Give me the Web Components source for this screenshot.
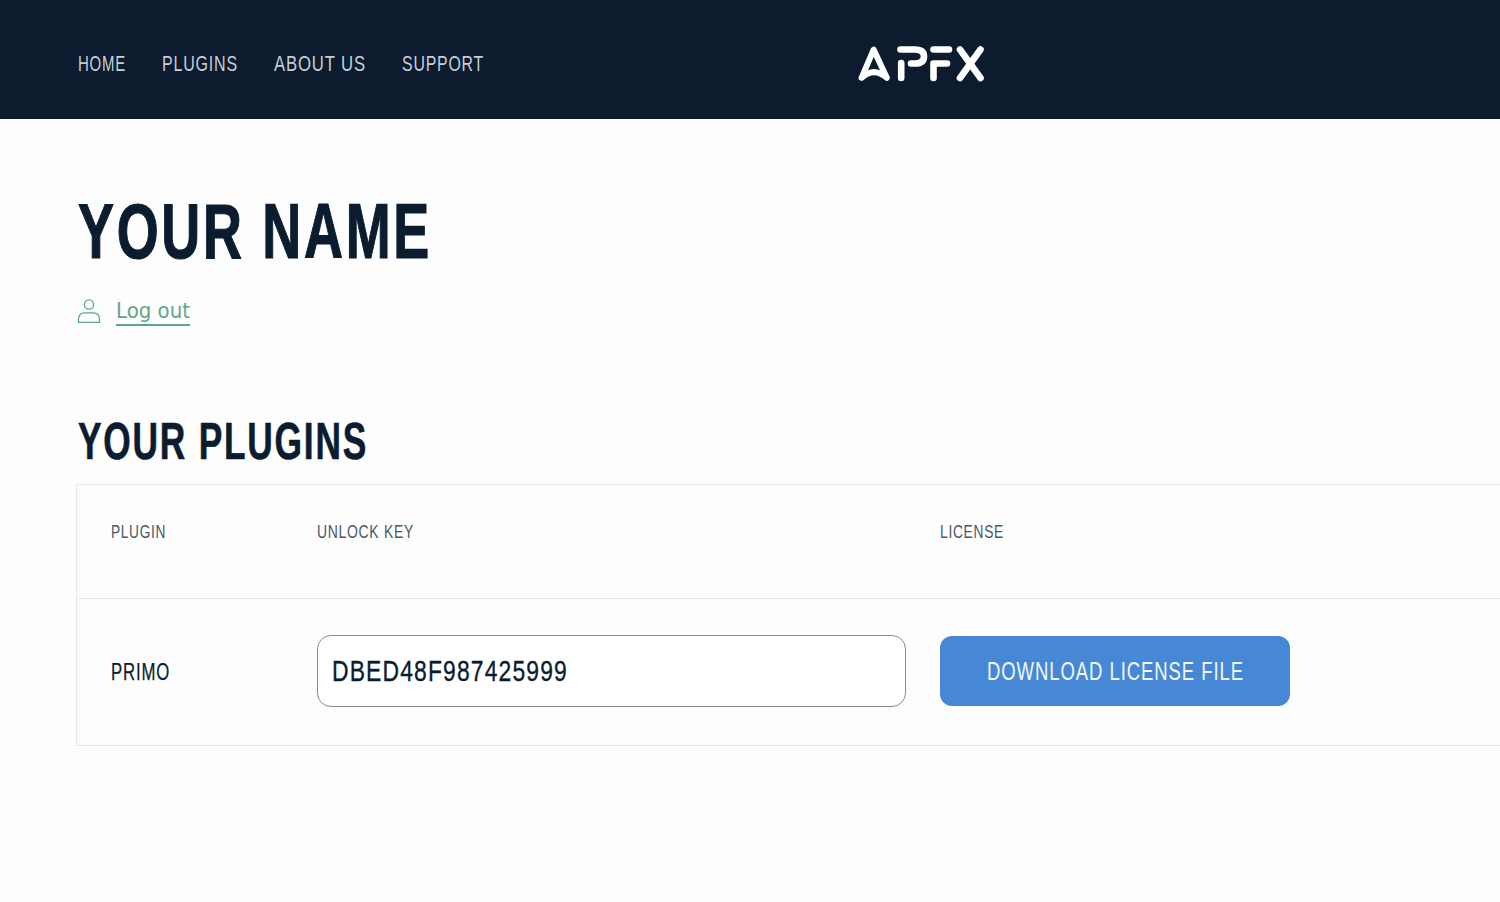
<!DOCTYPE html>
<html lang="en">
<head>
<meta charset="utf-8">
<title>APFX - Your plugins</title>
<style>
  html, body { margin: 0; height: 100%; background: #fdfdfd; overflow: hidden; }
  body { font-family: "Liberation Sans", sans-serif; color: #0a1c2e; }
</style>
</head>
<body>
<apfx-header>
  <a href="#"><fit-text w="48">HOME</fit-text></a>
  <a href="#"><fit-text w="76">PLUGINS</fit-text></a>
  <a href="#"><fit-text w="92">ABOUT US</fit-text></a>
  <a href="#"><fit-text w="82">SUPPORT</fit-text></a>
</apfx-header>
<account-page name="YOUR NAME">
  <plugin-table>
    <plugin-row name="PRIMO" unlock-key="DBED48F987425999"></plugin-row>
  </plugin-table>
</account-page>

<script>
// no condensed face is installed, so squeeze the text to the width it has in the design
class FitText extends HTMLElement {
  constructor() {
    super();
    this.attachShadow({ mode: 'open' });
    this.shadowRoot.innerHTML = `
      <style>
        :host { display: inline-block; vertical-align: top; white-space: nowrap; letter-spacing: 0.05em; }
        span { display: inline-block; transform-origin: 0 50%; }
      </style>
      <span><slot></slot></span>
    `;
  }
  connectedCallback() {
    const w = Number(this.getAttribute('w'));
    const span = this.shadowRoot.querySelector('span');
    const natural = span.getBoundingClientRect().width;
    span.style.transform = `scaleX(${w / natural})`;
    this.style.width = w + 'px';
  }
}

class ApfxHeader extends HTMLElement {
  constructor() {
    super();
    this.attachShadow({ mode: 'open' });
    this.shadowRoot.innerHTML = `
      <style>
        :host {
          display: grid;
          grid-template-columns: 781px auto 1fr;
          align-items: center;
          height: 119px;
          padding: 9px 0 0 77px;
          box-sizing: border-box;
          background: #0c1b2d;
        }
        nav { display: flex; gap: 36px; padding-left: 1px; }
        ::slotted(a) {
          color: #c6ced6;
          text-decoration: none;
          font-size: 22px;
          line-height: 26px;
        }
        svg { display: block; }
      </style>
      <nav><slot></slot></nav>
      <svg width="128" height="38" viewBox="0 0 128 38" fill="none" stroke="#fff" stroke-width="6.6" stroke-linecap="round" stroke-linejoin="round" role="img" aria-label="APFX">
        <path d="M15.6 4.6 L3.6 32.8 Q15.8 21.5 28.8 32.8 Z" stroke-width="6"/>
        <path d="M43.2 18 V33 M42.5 4.5 H57 Q66 4.5 66 11.5 Q66 18.5 57 18.5 H53"/>
        <path d="M75.5 4.5 H91 M75.5 18.5 H89 M75.5 18.5 V33"/>
        <path d="M102 4.5 L122.5 33 M122.5 4.5 L102 33"/>
      </svg>
    `;
  }
}

class AccountPage extends HTMLElement {
  constructor() {
    super();
    this.attachShadow({ mode: 'open' });
    this.shadowRoot.innerHTML = `
      <style>
        :host { display: block; padding: 66px 0 0 76px; }
        h1, h2 { margin: 0; font-weight: 700; color: #0a1c2e; }
        h1 { font-size: 78px; line-height: 92px; padding-left: 2px; -webkit-text-stroke: 1.2px #0a1c2e; }
        h2 { font-size: 51px; line-height: 60px; padding-left: 2px; margin: 0 0 12px; -webkit-text-stroke: 0.6px #0a1c2e; }
        .logout { display: flex; align-items: flex-start; gap: 14px; margin: 20px 0 86px 1px; }
        a {
          color: #5fa78a;
          font-family: "DejaVu Sans Condensed", "Liberation Sans", sans-serif;
          font-size: 22px;
          line-height: 27px;
          margin-left: 1px;
          text-decoration: none;
          border-bottom: 2px solid #5fa78a;
        }
        svg { display: block; margin-top: 1px; }
      </style>
      <h1><fit-text w="354"></fit-text></h1>
      <div class="logout">
        <svg width="24" height="26" viewBox="0 0 24 26" fill="none" stroke="#5fa78a" stroke-width="1.3">
          <circle cx="12" cy="6.5" r="4.6"/>
          <path d="M1.5 24.4 V21.5 Q1.5 14.8 8 14.8 H16 Q22.6 14.8 22.6 21.5 V24.4 Z" stroke-linejoin="round"/>
        </svg>
        <a href="#">Log out</a>
      </div>
      <h2><fit-text w="290">YOUR PLUGINS</fit-text></h2>
      <slot></slot>
    `;
    this.shadowRoot.querySelector('h1 fit-text').textContent = this.getAttribute('name');
  }
}

class PluginTable extends HTMLElement {
  constructor() {
    super();
    this.attachShadow({ mode: 'open' });
    this.shadowRoot.innerHTML = `
      <style>
        :host {
          display: block;
          border: 1px solid #e6e6e6;
          border-right: 0;
        }
        .head {
          display: grid;
          grid-template-columns: 206px 623px 1fr;
          align-items: center;
          height: 114px;
          padding: 0 0 19px 34px;
          box-sizing: border-box;
          border-bottom: 1px solid #e6e6e6;
          color: #4a5866;
          font-size: 18px;
          line-height: 22px;
        }
      </style>
      <div class="head">
        <span><fit-text w="55">PLUGIN</fit-text></span>
        <span><fit-text w="97">UNLOCK KEY</fit-text></span>
        <span><fit-text w="64">LICENSE</fit-text></span>
      </div>
      <slot></slot>
    `;
  }
}

class PluginRow extends HTMLElement {
  constructor() {
    super();
    this.attachShadow({ mode: 'open' });
    this.shadowRoot.innerHTML = `
      <style>
        :host {
          display: grid;
          grid-template-columns: 206px 623px 1fr;
          align-items: center;
          height: 146px;
          padding: 0 0 2px 34px;
          box-sizing: border-box;
        }
        .name { font-size: 23px; line-height: 28px; color: #0a1c2e; padding-top: 2px; -webkit-text-stroke: 0.25px #0a1c2e; }
        .key {
          display: flex;
          align-items: center;
          width: 589px;
          height: 72px;
          box-sizing: border-box;
          padding: 1px 13px 0 14px;
          border: 1.5px solid #858b99;
          border-radius: 14px;
          background: #fff;
          color: #0a1c2e;
          font-size: 29px;
          -webkit-text-stroke: 0.35px #0a1c2e;
        }
        button {
          display: flex;
          align-items: center;
          justify-content: center;
          width: 350px;
          height: 70px;
          padding: 0;
          border: 0;
          border-radius: 12px;
          background: #4788d6;
          color: #f2f7fc;
          font: 400 25px "Liberation Sans", sans-serif;
        }
      </style>
      <span class="name"><fit-text w="59"></fit-text></span>
      <div class="key" role="textbox" aria-readonly="true"><fit-text w="236"></fit-text></div>
      <span><button type="button"><fit-text w="257">DOWNLOAD LICENSE FILE</fit-text></button></span>
    `;
    this.shadowRoot.querySelector('.name fit-text').textContent = this.getAttribute('name');
    this.shadowRoot.querySelector('.key fit-text').textContent = this.getAttribute('unlock-key');
  }
}

customElements.define('apfx-header', ApfxHeader);
customElements.define('account-page', AccountPage);
customElements.define('plugin-table', PluginTable);
customElements.define('plugin-row', PluginRow);
// last, so every fit-text measures itself with its parent's styles in place
customElements.define('fit-text', FitText);
</script>
</body>
</html>
